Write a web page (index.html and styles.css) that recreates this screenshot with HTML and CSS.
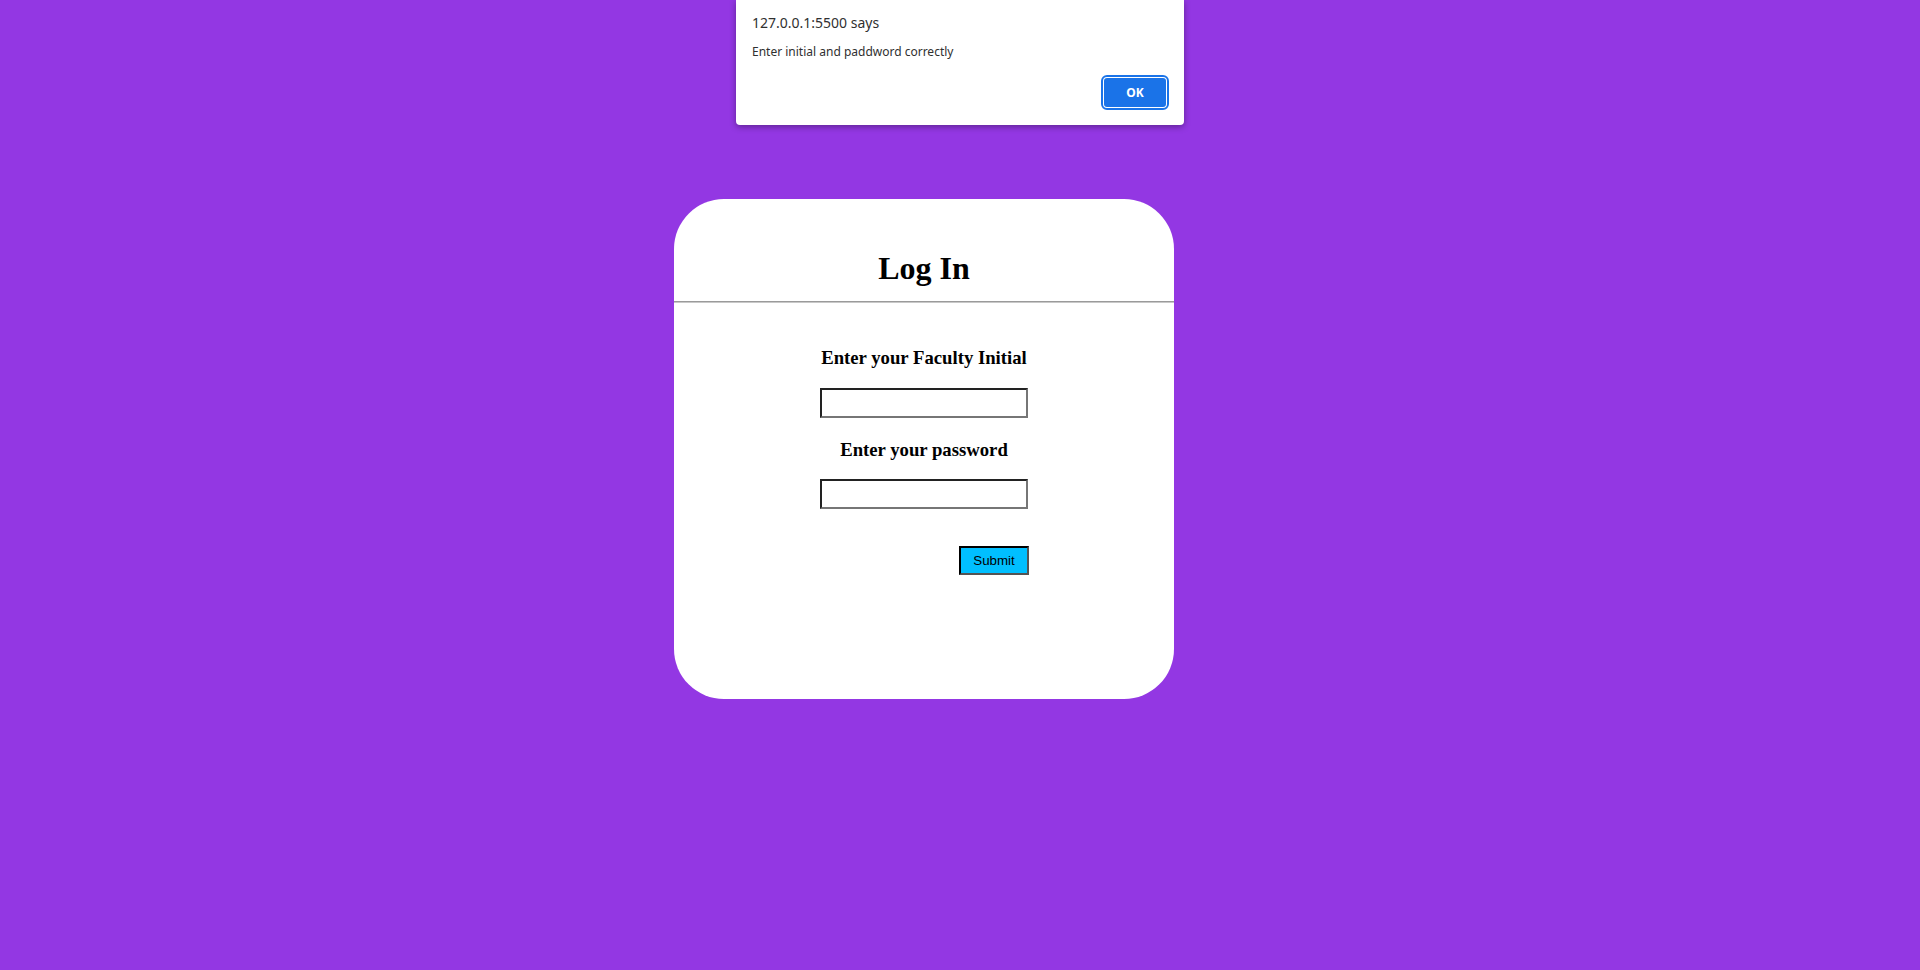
FILE: index.html
```html
<!DOCTYPE html>
<html lang="en">
<head>
<meta charset="utf-8">
<title>Log In</title>
<link rel="stylesheet" href="styles.css">
</head>
<body>
  <div class="card">
    <div class="card-head">
      <h1 class="title">Log In</h1>
    </div>
    <form class="form">
      <h3 class="label">Enter your Faculty Initial</h3>
      <input class="field" type="text">
      <h3 class="label label-2">Enter your password</h3>
      <input class="field" type="password">
      <button class="submit" type="button">Submit</button>
    </form>
  </div>

  <div class="dialog">
    <div class="dialog-title">127.0.0.1:5500 says</div>
    <div class="dialog-msg">Enter initial and paddword correctly</div>
    <div class="dialog-actions">
      <button class="ok" type="button">OK</button>
    </div>
  </div>
</body>
</html>
```
FILE: styles.css
```css
html, body {
  margin: 0;
  padding: 0;
}
body {
  background: #9337e3;
  height: 970px;
  overflow: hidden;
  font-family: "Liberation Serif", "Times New Roman", serif;
  position: relative;
}

.card {
  box-sizing: border-box;
  width: 500px;
  height: 500px;
  margin: 199px 0 0 674px;
  background: #fff;
  border-radius: 50px;
  display: flex;
  flex-direction: column;
}

.card-head {
  padding: 51px 0 16px;
  border-bottom: 1px solid #c8c8c8;
  box-shadow: inset 0 -1px 0 #9a9a9a;
}
.title {
  margin: 0;
  font-size: 32px;
  line-height: 36px;
  font-weight: bold;
  text-align: center;
  color: #000;
}

.form {
  width: 208px;
  margin: 44px auto 0;
  display: flex;
  flex-direction: column;
  align-items: center;
}
.label {
  margin: 0;
  font-size: 18.72px;
  line-height: 22px;
  font-weight: bold;
  color: #000;
  white-space: nowrap;
}
.label-2 {
  margin-top: 21px;
}
.field {
  box-sizing: border-box;
  width: 208px;
  height: 30px;
  margin-top: 19px;
  padding: 1px 2px;
  background: #fff;
  border-style: solid;
  border-width: 2px;
  border-color: #222222 #767676 #767676 #222222;
  outline: none;
}
.label-2 + .field {
  margin-top: 18px;
}
.submit {
  align-self: flex-end;
  margin-right: -1px;
  box-sizing: border-box;
  width: 70px;
  height: 29px;
  margin-top: 37px;
  padding: 0;
  background: #00bfff;
  border-style: solid;
  border-width: 2px;
  border-color: #000 #545454 #545454 #000;
  font-family: "Liberation Sans", Arial, sans-serif;
  font-size: 13.33px;
  color: #000;
}

.dialog {
  position: absolute;
  left: 736px;
  top: 0;
  width: 448px;
  height: 125px;
  box-sizing: border-box;
  background: #fff;
  border-radius: 0 0 4px 4px;
  box-shadow: 0 2px 6px rgba(0, 0, 0, 0.35);
  padding: 13px 16px 0 16px;
  font-family: "Noto Sans", "Open Sans", sans-serif;
  color: #333;
}
.dialog-title {
  font-size: 14px;
  line-height: 20px;
  color: #303030;
}
.dialog-msg {
  margin-top: 11px;
  font-size: 12px;
  line-height: 16px;
  color: #303030;
}
.dialog-actions {
  display: flex;
  justify-content: flex-end;
  margin-top: 18px;
}
.ok {
  box-sizing: border-box;
  width: 62px;
  height: 29px;
  margin-right: 2px;
  background: #1a73e8;
  border: none;
  border-radius: 3px;
  outline: 2px solid #1a73e8;
  outline-offset: 1px;
  box-shadow: 0 0 0 1px #fff;
  color: #fff;
  font-family: "Noto Sans", "Open Sans", sans-serif;
  font-size: 12px;
  font-weight: bold;
  padding: 0;
}
```
